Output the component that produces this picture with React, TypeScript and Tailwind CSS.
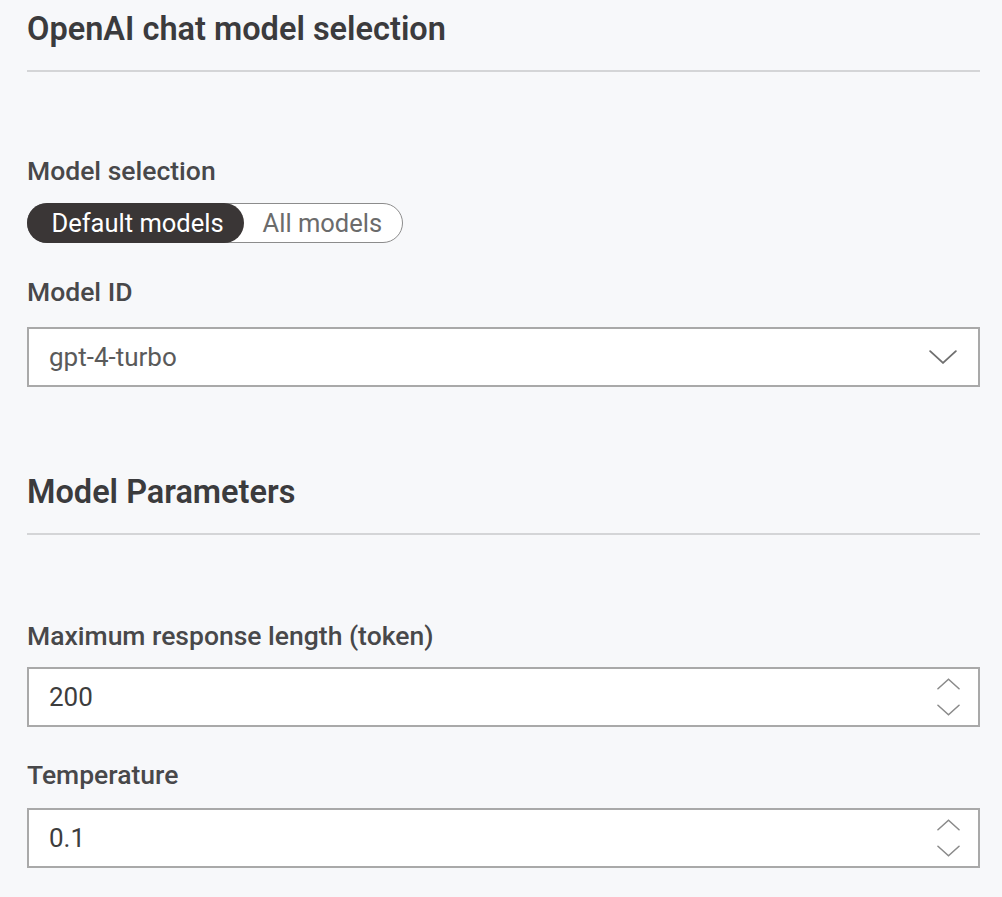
function SectionTitle({ children }: { children: string }) {
  return (
    <div className="border-b-2 border-[#d4d5d7] pb-[21px]">
      <h2 className="text-[32.5px] leading-[40px] font-semibold text-[#3b3b3d]">{children}</h2>
    </div>
  );
}

function Label({ children }: { children: string }) {
  return <div className="text-[26.5px] leading-[30px] font-medium text-[#48484a]">{children}</div>;
}

function Chevron({ up = false, className = '' }: { up?: boolean; className?: string }) {
  return (
    <svg viewBox="0 0 24 12" fill="none" stroke="currentColor" strokeWidth={1.6} strokeLinecap="round" className={className}>
      <polyline points={up ? '1,11 12,1 23,11' : '1,1 12,11 23,1'} />
    </svg>
  );
}

function NumberField({ value }: { value: string }) {
  return (
    <div className="flex h-[60px] items-center justify-between border-2 border-[#a9a9a9] bg-white pl-[20px] pr-[18px]">
      <span className="text-[26px] text-[#3d3d3d]">{value}</span>
      <div className="flex flex-col items-center gap-[14px] text-[#8a8a8a]">
        <Chevron up className="h-[12px] w-[23px]" />
        <Chevron className="h-[12px] w-[23px]" />
      </div>
    </div>
  );
}

export default function App() {
  return (
    <div className="min-h-[897px] w-[1002px] bg-[#f7f8fa] pl-[27px] pr-[22px] pt-[9px]" style={{ fontFamily: 'Roboto, "Liberation Sans", sans-serif' }}>
      <SectionTitle>OpenAI chat model selection</SectionTitle>

      <div className="mt-[84px]">
        <Label>Model selection</Label>
        <div className="mt-[17px] inline-flex h-[40px] items-center rounded-full border-[1.5px] border-[#8c8c8c] bg-white">
          <button className="-my-[1.5px] -ml-[1.5px] flex h-[40px] items-center rounded-full bg-[#3a3636] pl-[25px] pr-[20px] text-[25.5px] text-white">
            Default models
          </button>
          <button className="flex h-full items-center pl-[19px] pr-[20px] text-[25.5px] text-[#6b6b6b]">All models</button>
        </div>
      </div>

      <div className="mt-[34px]">
        <Label>Model ID</Label>
        <div className="mt-[20px] flex h-[60px] items-center justify-between border-2 border-[#a9a9a9] bg-white pl-[20px] pr-[21px]">
          <span className="text-[26px] text-[#5a5a5a]">gpt-4-turbo</span>
          <Chevron className="h-[14px] w-[28px] text-[#6f6f6f]" />
        </div>
      </div>

      <div className="mt-[85px]">
        <SectionTitle>Model Parameters</SectionTitle>
      </div>

      <div className="mt-[86px]">
        <Label>Maximum response length (token)</Label>
        <div className="mt-[16px]">
          <NumberField value="200" />
        </div>
      </div>

      <div className="mt-[33px]">
        <Label>Temperature</Label>
        <div className="mt-[18px]">
          <NumberField value="0.1" />
        </div>
      </div>
    </div>
  );
}
